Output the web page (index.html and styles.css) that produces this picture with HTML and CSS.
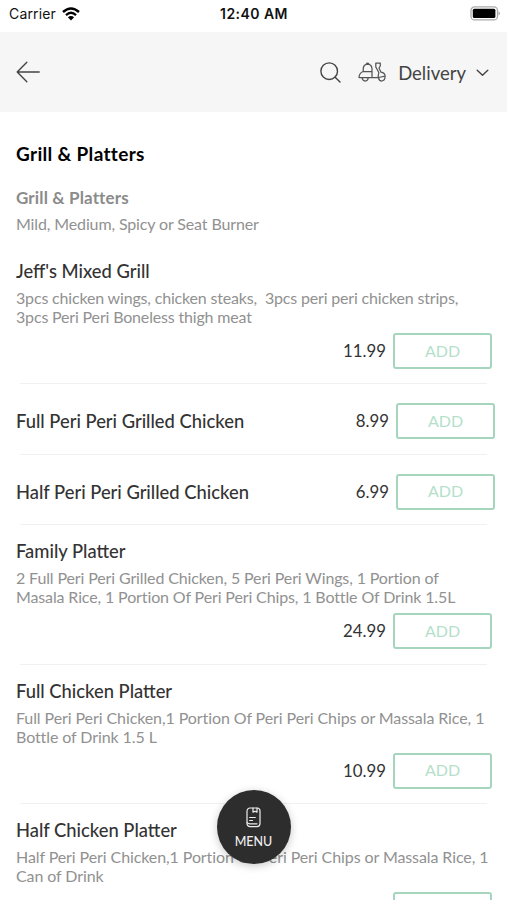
FILE: index.html
```
<!DOCTYPE html>
<html lang="en">
<head>
<meta charset="utf-8">
<title>Grill &amp; Platters</title>
<link rel="stylesheet" href="styles.css">
</head>
<body>
<div class="app">
  <div class="status">
    <div class="carrier">Carrier
      <svg width="18" height="14" viewBox="0 0 18 14" fill="none" stroke="#000" stroke-width="2.4"><path d="M1 5Q9-2.2 17 5M4 8.1Q9 3.6 14 8.1"/><path d="M9 13.5L5.9 10.3Q9 7.8 12.1 10.3Z" fill="#000" stroke="none"/></svg>
    </div>
    <div class="time">12:40 AM</div>
    <svg class="battery" width="31" height="15" viewBox="0 0 31 15"><rect x="1" y=".9" width="26.5" height="13" rx="3.5" fill="#fff" stroke="#aaa" stroke-width="1.3"/><rect x="2.8" y="2.7" width="22.6" height="9.4" rx="1.5"/><path d="M28.5 5.2q3 2.2 0 4.4z" fill="#aaa"/></svg>
  </div>
  <header class="header">
    <svg class="back" width="24" height="22" viewBox="0 0 24 22" fill="none" stroke="#444" stroke-width="1.4" stroke-linecap="round" stroke-linejoin="round"><path d="M23.2 11H1.2M10.8 1.2L1.2 11L10.8 20.7"/></svg>
    <svg class="search" width="21" height="21" viewBox="0 0 21 21" fill="none" stroke="#444" stroke-width="1.4" stroke-linecap="round"><circle cx="9.2" cy="9.2" r="8.3"/><path d="M15.2 15.2L20 20"/></svg>
    <svg class="scooter" width="28" height="20" viewBox="0 0 28 20" fill="none" stroke="#555" stroke-width="1.25" stroke-linejoin="round" stroke-linecap="round"><path d="M5.2 9.5V7Q5.4 2.4 9.6 2.2Q13.8 2.4 14 7V14.5M8.2 2.2Q9.6 .2 11 2.2M5.2 9.5H14M5.2 9.5Q1.2 11 1 15.5H20.4M20 15.3L20.8 10.5L17.8 5V1.2H22.3V4L21 6L23 10.2Q27 11 27.2 14.2L20.4 15.5"/><path d="M4.2 15.8Q4.4 19 7.2 19Q10 19 10.2 15.8M20.6 15.8Q21 19 23.8 19Q27 18.6 27 14.8"/></svg>
    <span class="mode">Delivery</span>
    <svg class="chevron" width="13" height="8" viewBox="0 0 13 8" fill="none" stroke="#444" stroke-width="1.4" stroke-linecap="round" stroke-linejoin="round"><path d="M1.2 1.2L6.5 6.3L11.8 1.2"/></svg>
  </header>
  <main>
    <section class="intro">
      <h1>Grill &amp; Platters</h1>
      <h2>Grill &amp; Platters</h2>
      <p>Mild, Medium, Spicy or Seat Burner</p>
    </section>
    <article class="item">
      <h3>Jeff's Mixed Grill</h3>
      <p class="desc tight">3pcs chicken wings, chicken steaks,&nbsp; 3pcs peri peri chicken strips,<br>3pcs Peri Peri Boneless thigh meat</p>
      <div class="buy"><span class="price">11.99</span><button>ADD</button></div>
    </article>
    <article class="item short">
      <h3>Full Peri Peri Grilled Chicken</h3>
      <div class="buy"><span class="price">8.99</span><button>ADD</button></div>
    </article>
    <article class="item short">
      <h3>Half Peri Peri Grilled Chicken</h3>
      <div class="buy"><span class="price">6.99</span><button>ADD</button></div>
    </article>
    <article class="item">
      <h3>Family Platter</h3>
      <p class="desc">2 Full Peri Peri Grilled Chicken, 5 Peri Peri Wings, 1 Portion of<br>Masala Rice, 1 Portion Of Peri Peri Chips, 1 Bottle Of Drink 1.5L</p>
      <div class="buy"><span class="price">24.99</span><button>ADD</button></div>
    </article>
    <article class="item">
      <h3>Full Chicken Platter</h3>
      <p class="desc loose">Full Peri Peri Chicken,1 Portion Of Peri Peri Chips or Massala Rice, 1<br>Bottle of Drink 1.5 L</p>
      <div class="buy"><span class="price">10.99</span><button>ADD</button></div>
    </article>
    <article class="item">
      <h3>Half Chicken Platter</h3>
      <p class="desc loose">Half Peri Peri Chicken,1 Portion Of Peri Peri Chips or Massala Rice, 1<br>Can of Drink</p>
      <div class="buy"><button></button></div>
    </article>
  </main>
  <div class="menu">
    <svg width="15" height="21" viewBox="0 0 15 21" fill="none" stroke="#eee" stroke-width="1.2" stroke-linecap="round" stroke-linejoin="round"><rect x="1" y="1" width="13" height="18.6" rx="3"/><path d="M7 1.2V5.2L9 4.2L11 5.2V1.2M3.7 10.5H9.3M3.7 13.5H6.5M1.2 15.7Q2 16.8 4 16.8H11"/></svg>
    <span>MENU</span>
  </div>
</div>
</body>
</html>
```

FILE: styles.css
```
* { box-sizing: border-box; margin: 0; padding: 0; }
body { background: #fff; font-family: Lato, sans-serif; color: #333; }
.app { position: relative; height: 900px; overflow: hidden; }
.status { height: 32px; display: grid; grid-template-columns: 1fr auto 1fr; padding: 0 8px 5px 9px; align-items: center; font: 14px Inter, sans-serif; color: #111; }
.carrier { display: flex; align-items: center; gap: 6px; letter-spacing: .15px; }
.time { font-weight: 600; letter-spacing: .45px; }
.battery { justify-self: end; margin-right: -2px; }
.header { height: 80px; background: #f6f6f6; display: flex; align-items: center; padding: 0 18px 0 16px; }
.search { margin-left: auto; margin-right: 17px; }
.scooter { margin-right: 12px; }
.mode { font-size: 18.5px; line-height: 24px; color: #444; margin: 1px 10px 0 0; }
.chevron { margin-top: 2px; }
.intro { height: 132px; padding: 30px 16px 0; }
h1 { font-size: 19px; line-height: 24px; font-weight: 700; color: #000; letter-spacing: .32px; }
h2 { margin-top: 21px; font-size: 17px; line-height: 22px; font-weight: 700; color: #8b8b8b; letter-spacing: .14px; }
.intro p { margin-top: 5px; font-size: 16px; line-height: 20px; color: #919191; letter-spacing: -.13px; }
.item { position: relative; height: 139.3px; padding: 15px 15px 0 16px; white-space: nowrap; }
.item::after { content: ""; position: absolute; left: 20px; right: 20px; bottom: -1px; height: 1px; background: #f0f0f0; }
h3 { font-size: 18.35px; line-height: 24px; font-weight: 500; color: #333; }
.desc { margin-top: 5px; font-size: 16px; line-height: 19px; color: #919191; letter-spacing: -.13px; }
.tight { letter-spacing: -.17px; }
.loose { letter-spacing: -.09px; }
.buy { display: flex; justify-content: flex-end; align-items: center; gap: 7px; margin-top: 7px; }
.price { font-size: 16.8px; color: #333; padding-bottom: 1px; }
button { width: 99px; height: 36px; padding-bottom: 2px; border: 2px solid #a5d6bd; border-radius: 3px; background: #fff; font: 16px Lato, sans-serif; color: #b5dfca; }
.short { height: 70.6px; display: flex; align-items: center; justify-content: space-between; padding: 5px 12px 0 16px; }
.short .buy { margin-top: 0; }
.menu { position: absolute; left: 217px; top: 790px; width: 74px; height: 74px; border-radius: 50%; background: #2d2d2d; color: #eee; display: flex; flex-direction: column; align-items: center; padding: 17px 1px 0 0; box-shadow: 0 2px 9px rgba(0,0,0,.22); }
.menu span { font-size: 12.5px; line-height: 16px; margin-top: 6px; font-weight: 500; }
```
